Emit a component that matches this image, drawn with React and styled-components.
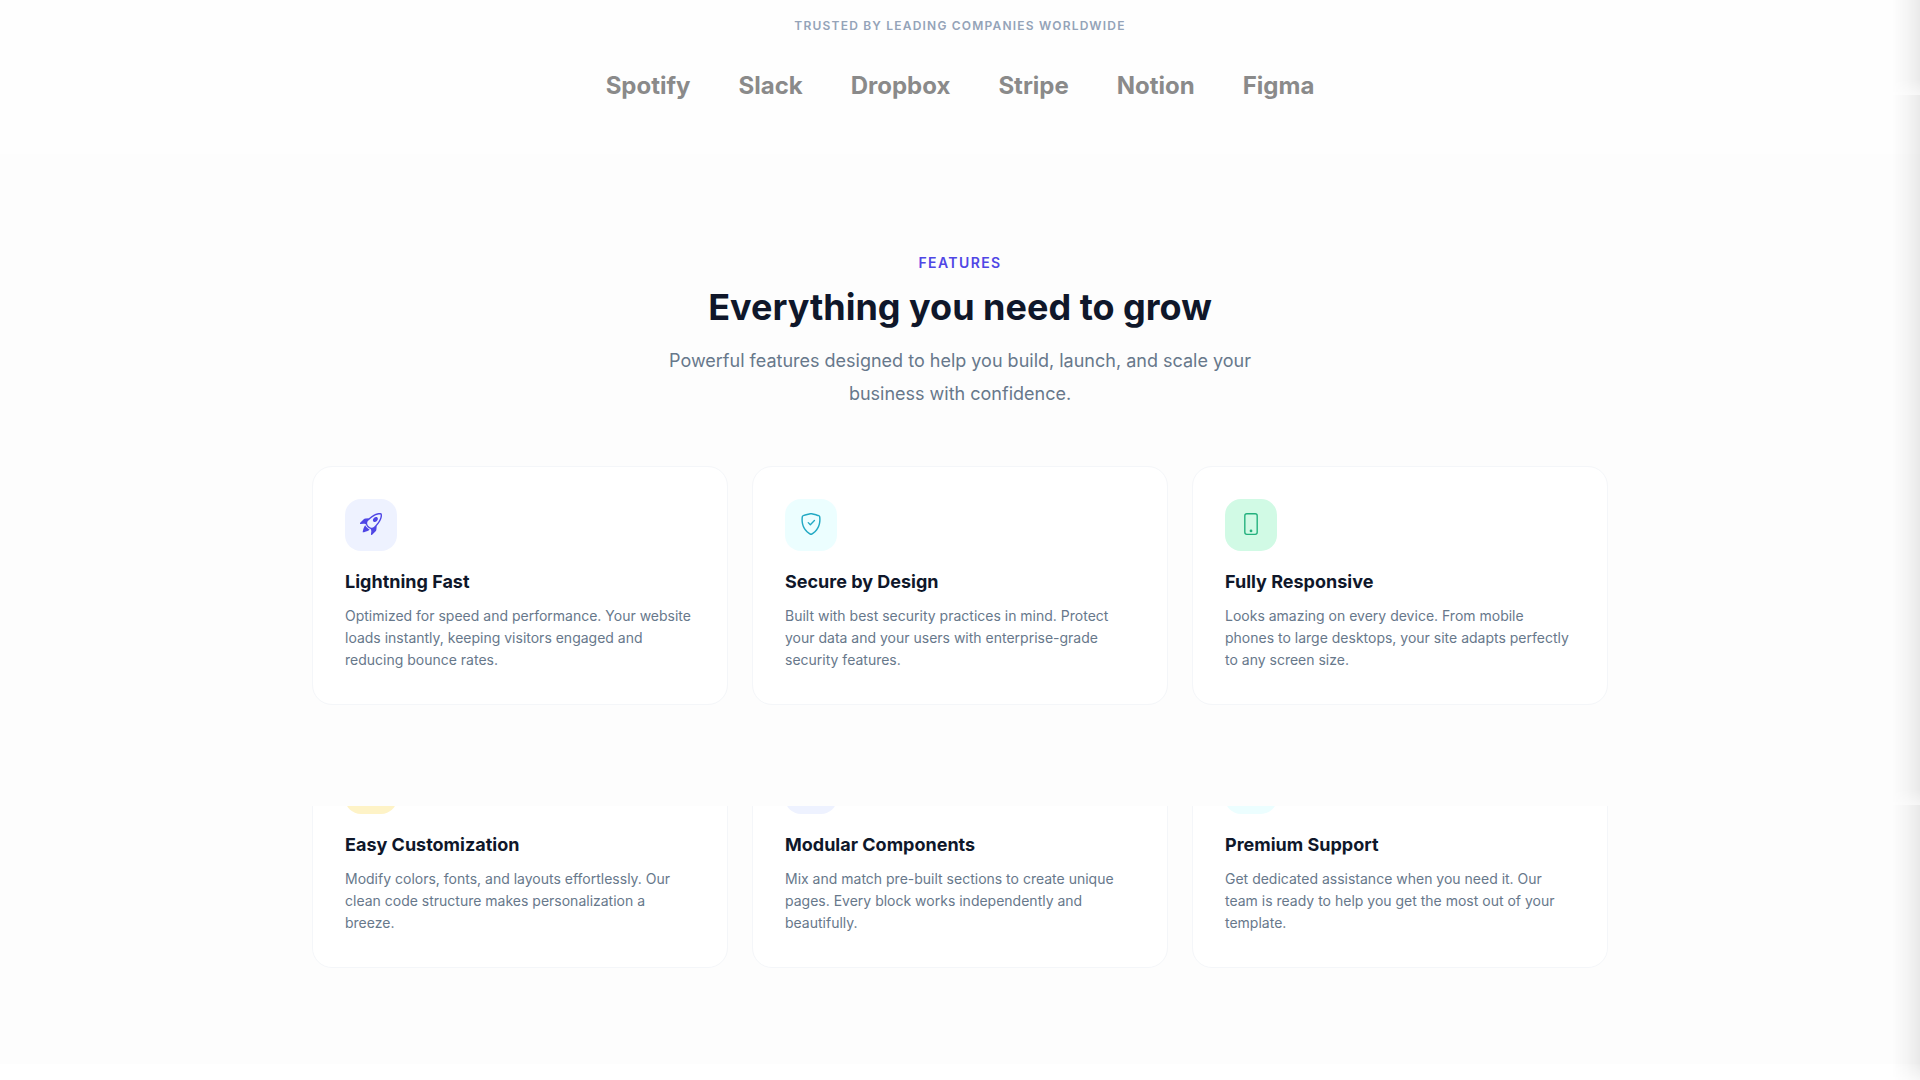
import React from "react";
import styled, { createGlobalStyle } from "styled-components";
import { BsRocketTakeoff, BsShieldCheck, BsPhone } from "react-icons/bs";

const GlobalStyle = createGlobalStyle`
  *, *::before, *::after { box-sizing: border-box; }
  body {
    margin: 0;
    background: #fff;
    color: #0f172a;
    font-family: Inter, "Liberation Sans", sans-serif;
    overflow: hidden;
  }
  h2, h3, p, ul { margin: 0; padding: 0; }
`;

const Page = styled.main`
  position: relative;
  min-height: 100vh;
`;

const Trusted = styled.section`
  display: flex;
  flex-direction: column;
  align-items: center;
  gap: 32px;
  padding: 16px 24px 50px;
  background: #fefefe;
`;

const TrustedLabel = styled.p`
  color: #94a3b8;
  font-size: 12px;
  font-weight: 600;
  line-height: 20px;
  letter-spacing: 0.1em;
  text-transform: uppercase;
`;

const Logos = styled.ul`
  display: flex;
  flex-wrap: wrap;
  justify-content: center;
  gap: 48px;
  list-style: none;
`;

const Logo = styled.li`
  color: #8a8a8a;
  font-size: 24px;
  font-weight: 700;
  line-height: 36px;
`;

const Features = styled.section`
  padding: 96px 24px;
  background: #fdfdfd;
`;

const Container = styled.div`
  max-width: 1296px;
  margin: 0 auto;
`;

const Header = styled.header`
  display: flex;
  flex-direction: column;
  align-items: center;
  max-width: 600px;
  margin: 0 auto 56px;
  text-align: center;
`;

const Eyebrow = styled.p`
  margin-bottom: 8px;
  color: #4f46e5;
  font-size: 14px;
  font-weight: 600;
  line-height: 26px;
  letter-spacing: 0.1em;
  text-transform: uppercase;
`;

const Heading = styled.h2`
  margin-bottom: 14px;
  font-size: 36px;
  font-weight: 700;
  line-height: 46px;
`;

const Lead = styled.p`
  color: #67788b;
  font-size: 18px;
  line-height: 33px;
`;

const CardRow = styled.div`
  display: grid;
  grid-template-columns: repeat(3, 1fr);
  gap: 24px;
  margin-top: 24px;
  clip-path: ${(p) => (p.$revealFrom ? `inset(${p.$revealFrom} 0 0 0)` : "none")};
`;

const Card = styled.article`
  padding: 32px 32px 33px;
  border: 1px solid #f4f6f9;
  border-radius: 20px;
  background: #fff;
`;

const IconTile = styled.div`
  display: flex;
  align-items: center;
  justify-content: center;
  width: 52px;
  height: 52px;
  margin-bottom: 16px;
  padding-bottom: 2px;
  border-radius: 16px;
  background: ${(p) => p.$tint};
  color: ${(p) => p.$color};
  font-size: 22px;
`;

const CardTitle = styled.h3`
  margin-bottom: 8px;
  font-size: 18px;
  font-weight: 700;
  line-height: 30px;
`;

const CardText = styled.p`
  color: #67788b;
  font-size: 14px;
  line-height: 22px;
`;

const EdgeShadow = styled.div`
  position: absolute;
  top: 0;
  right: 0;
  bottom: 0;
  display: flex;
  flex-direction: column;
  width: 28px;
  pointer-events: none;
`;

const ShadowStrip = styled.span`
  flex: ${(p) => p.$grow} 1 0;
  background: linear-gradient(to right, rgba(0, 0, 0, 0), rgba(0, 0, 0, 0.03) 50%, rgba(0, 0, 0, 0.08));
  mask-image: linear-gradient(to bottom, #000 calc(100% - 16px), rgba(0, 0, 0, 0.4));
`;

const companies = ["Spotify", "Slack", "Dropbox", "Stripe", "Notion", "Figma"];

const rows = [
  [
    {
      title: "Lightning Fast",
      text: "Optimized for speed and performance. Your website loads instantly, keeping visitors engaged and reducing bounce rates.",
      tint: "#eef2ff",
      color: "#4f46e5",
      Icon: BsRocketTakeoff,
    },
    {
      title: "Secure by Design",
      text: "Built with best security practices in mind. Protect your data and your users with enterprise-grade security features.",
      tint: "#ecfeff",
      color: "#22a9c4",
      Icon: BsShieldCheck,
    },
    {
      title: "Fully Responsive",
      text: "Looks amazing on every device. From mobile phones to large desktops, your site adapts perfectly to any screen size.",
      tint: "#d1fae5",
      color: "#22b07d",
      Icon: BsPhone,
    },
  ],
  [
    {
      title: "Easy Customization",
      text: "Modify colors, fonts, and layouts effortlessly. Our clean code structure makes personalization a breeze.",
      tint: "#fef3c7",
    },
    {
      title: "Modular Components",
      text: "Mix and match pre-built sections to create unique pages. Every block works independently and beautifully.",
      tint: "#eef2ff",
    },
    {
      title: "Premium Support",
      text: "Get dedicated assistance when you need it. Our team is ready to help you get the most out of your template.",
      tint: "#ecfeff",
    },
  ],
];

function FeatureCard({ title, text, tint, color, Icon }) {
  return (
    <Card>
      <IconTile $tint={tint} $color={color}>
        {Icon && <Icon aria-hidden="true" />}
      </IconTile>
      <CardTitle>{title}</CardTitle>
      <CardText>{text}</CardText>
    </Card>
  );
}

export default function App() {
  return (
    <Page>
      <GlobalStyle />
      <Trusted>
        <TrustedLabel>Trusted by leading companies worldwide</TrustedLabel>
        <Logos>
          {companies.map((name) => (
            <Logo key={name}>{name}</Logo>
          ))}
        </Logos>
      </Trusted>
      <Features>
        <Container>
          <Header>
            <Eyebrow>Features</Eyebrow>
            <Heading>Everything you need to grow</Heading>
            <Lead>
              Powerful features designed to help you build, launch, and scale your business with confidence.
            </Lead>
          </Header>
          {rows.map((cards, i) => (
            <CardRow key={i} $revealFrom={i === 1 ? "77px" : undefined}>
              {cards.map((card) => (
                <FeatureCard key={card.title} {...card} />
              ))}
            </CardRow>
          ))}
        </Container>
      </Features>
      <EdgeShadow>
        <ShadowStrip $grow={95} />
        <ShadowStrip $grow={710} />
        <ShadowStrip $grow={275} />
      </EdgeShadow>
    </Page>
  );
}
